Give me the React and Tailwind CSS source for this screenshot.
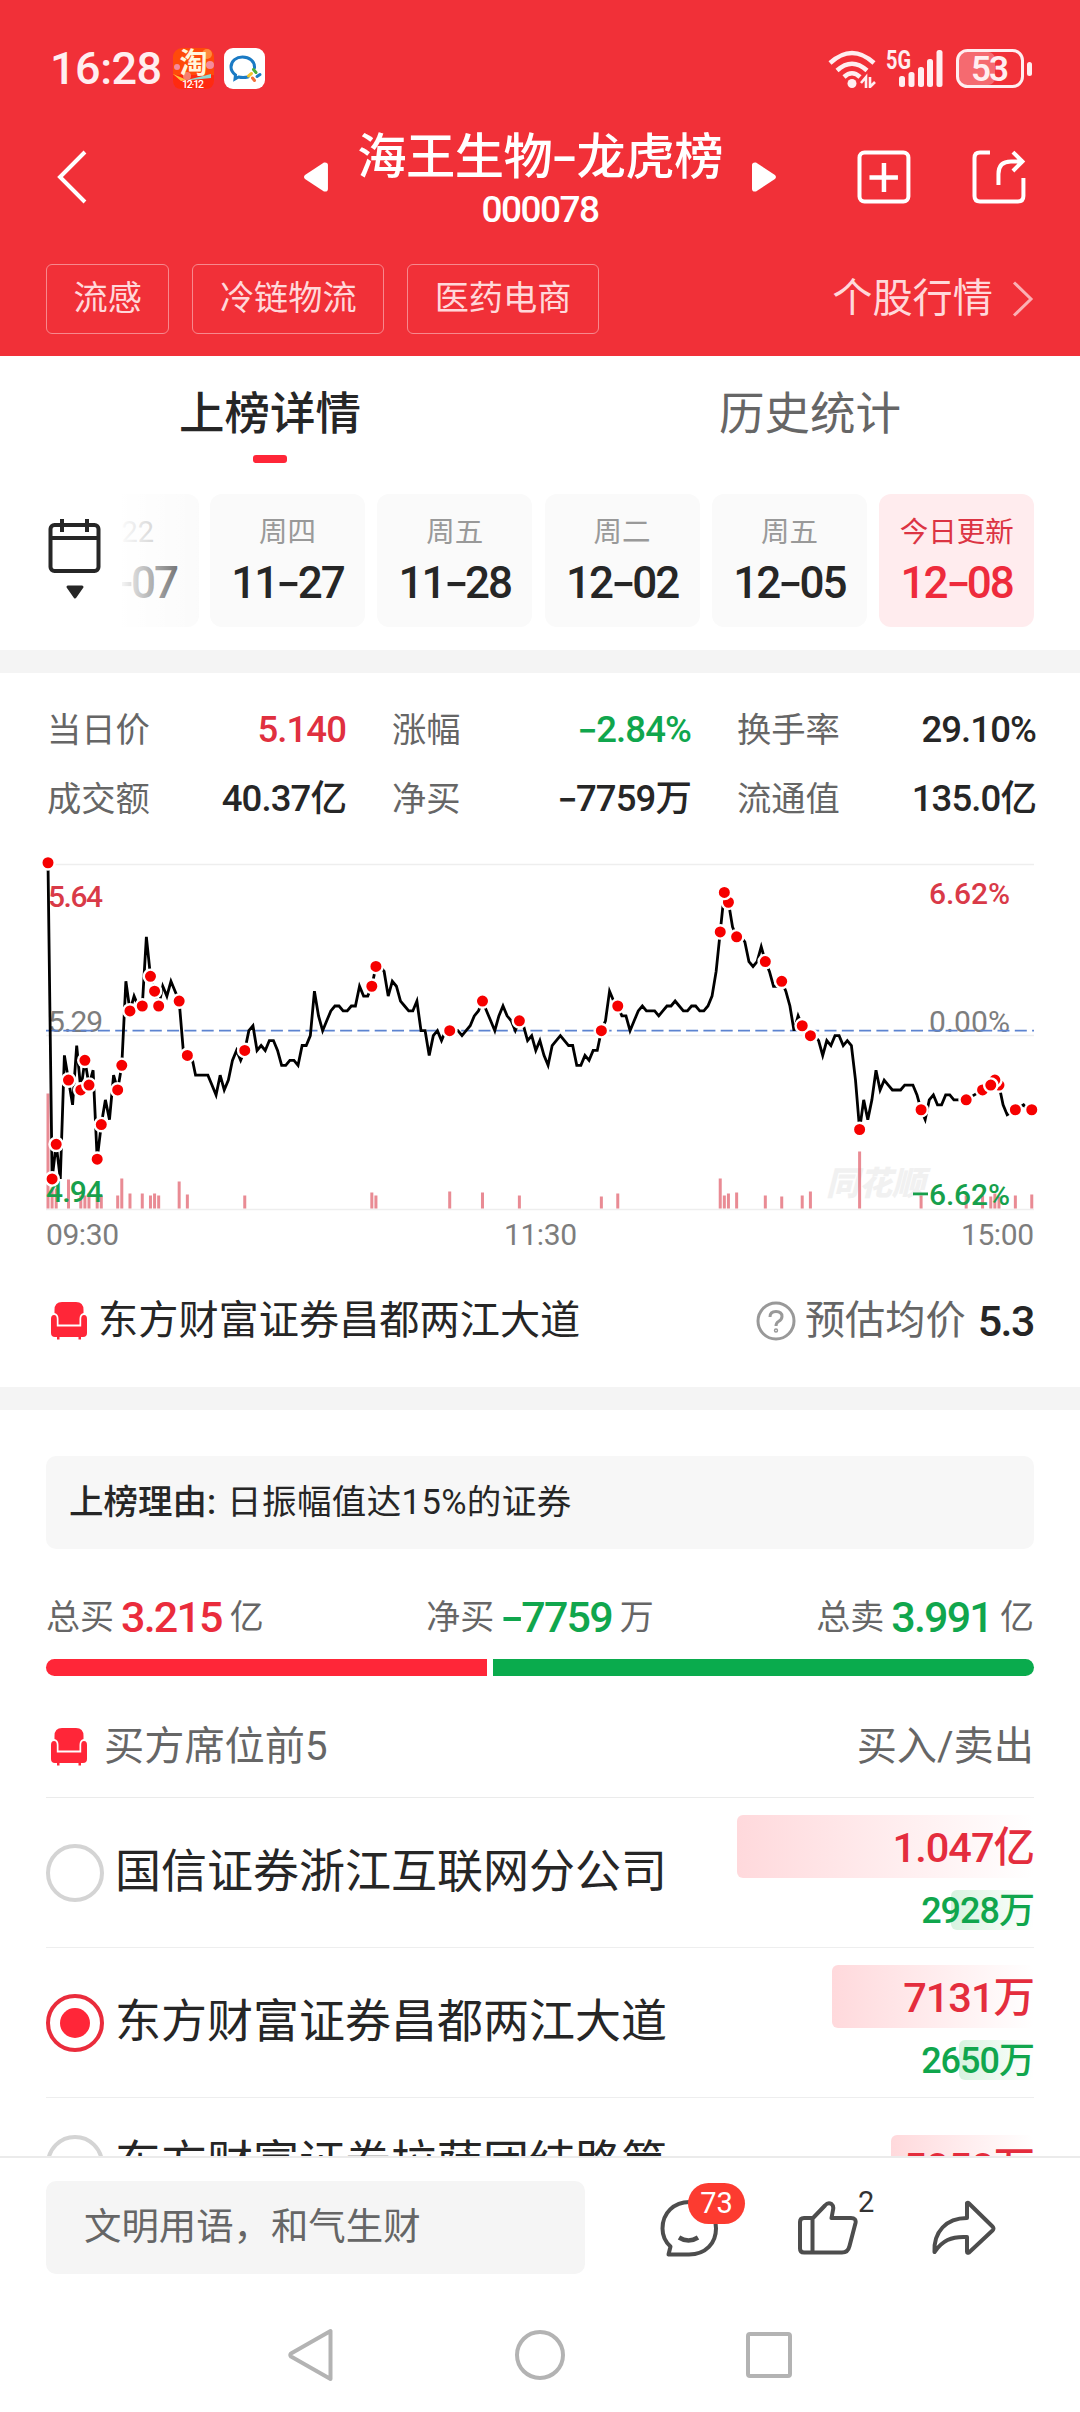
import { Fragment } from 'react'

// [minuto, ticks de 0.01 respecto al cierre anterior]
const precios = [
  [0, 34], [1, -30], [2, -23], [3, -30], [4, -5], [5, -10], [6, -15], [7, -3], [8, -12], [9, -6], [10, -11], [11, -8],
  [12, -26], [13, -19], [14, -14], [15, -18], [16, -9], [17, -12], [18, -7], [19, 10], [20, 4], [21, 7], [22, 5], [23, 5],
  [24, 19], [25, 11], [26, 8], [27, 5], [28, 9], [29, 7], [30, 10], [31, 8], [32, 6], [33, -4], [34, -5], [35, -5],
  [36, -9], [39, -9], [40, -11], [41, -13], [42, -9], [43, -12], [44, -10], [45, -6], [46, -4], [47, -6], [48, -4], [49, 0],
  [50, 1], [51, -4], [52, -3], [53, -4], [54, -2], [55, -2], [56, -4], [57, -7], [58, -7], [59, -6], [60, -6], [61, -7],
  [62, -3], [63, -3], [64, -1], [65, 8], [66, 3], [67, 0], [68, 2], [69, 4], [70, 5], [71, 5], [72, 4], [73, 4],
  [74, 5], [75, 5], [76, 9], [77, 7], [78, 7], [79, 9], [80, 13], [81, 13], [82, 12], [83, 7], [84, 10], [85, 9],
  [86, 6], [87, 5], [88, 4], [89, 4], [90, 6], [91, 0], [92, 0], [93, -5], [94, -1], [95, 0], [96, -2], [97, 0],
  [100, 0], [101, -1], [102, 0], [103, 1], [104, 3], [105, 4], [106, 6], [107, 4], [108, 2], [109, 0], [110, 3], [111, 5],
  [112, 3], [113, 2], [114, 0], [115, 2], [116, 1], [117, -2], [118, -1], [119, -4], [120, -2], [121, -5], [122, -7], [123, -3],
  [124, -2], [125, -1], [126, -2], [127, -3], [128, -3], [129, -7], [130, -7], [131, -5], [132, -6], [133, -4], [134, -4], [135, 0],
  [136, 2], [137, 8], [138, 6], [139, 5], [140, 3], [141, 3], [142, 0], [143, 2], [144, 4], [145, 5], [146, 4], [148, 4],
  [149, 3], [150, 4], [151, 5], [152, 5], [153, 6], [154, 5], [155, 4], [156, 4], [157, 5], [158, 5], [159, 4], [160, 4],
  [161, 5], [162, 7], [163, 12], [164, 20], [165, 28], [166, 26], [167, 21], [168, 19], [169, 19], [170, 18], [171, 14], [172, 13],
  [173, 14], [174, 17], [175, 14], [176, 12], [177, 9], [178, 9], [179, 10], [180, 8], [181, 5], [182, 0], [183, 3], [184, 1],
  [185, 0], [186, -1], [187, -1], [188, -2], [189, -5], [190, -2], [191, -3], [192, -1], [193, -1], [194, -3], [195, -2], [196, -3],
  [197, -10], [198, -20], [199, -14], [200, -18], [201, -14], [202, -8], [203, -12], [204, -10], [205, -11], [206, -12], [208, -12], [209, -11],
  [211, -11], [212, -13], [213, -16], [214, -18], [215, -14], [216, -13], [217, -15], [218, -15], [219, -13], [220, -13], [221, -14], [224, -14],
  [226, -13], [228, -12], [229, -11], [230, -11], [231, -10], [232, -11], [233, -15], [234, -17], [236, -16], [238, -15], [239, -16], [240, -16]
]

// en orden de dibujo: los últimos tapan a los anteriores
const puntos = [
  [0, 34], [2, -23], [1, -30], [5, -10], [8, -12], [9, -6], [10, -11], [12, -26], [13, -19], [17, -12], [18, -7], [20, 4],
  [23, 5], [25, 11], [26, 8], [27, 5], [32, 6], [34, -5], [48, -4], [79, 9], [80, 13], [98, 0], [106, 6], [115, 2],
  [135, 0], [139, 5], [164, 20], [166, 26], [165, 28], [168, 19], [175, 14], [179, 10], [186, -1], [184, 1], [198, -20],
  [213, -16], [224, -14], [232, -11], [231, -10], [228, -12], [230, -11], [236, -16], [240, -16]
]

// [minuto, alto]
const volumen = [
  [0, 115], [1, 21], [2, 20], [5, 29], [8, 13], [9, 13], [10, 15], [12, 13], [13, 13], [17, 13], [18, 30], [20, 15],
  [23, 15], [25, 13], [26, 15], [27, 13], [32, 27], [34, 14], [48, 13], [79, 16], [80, 13], [98, 17], [106, 16], [115, 13],
  [135, 12], [139, 15], [164, 30], [165, 13], [166, 15], [168, 16], [175, 13], [179, 12], [184, 13], [186, 17], [198, 57],
  [213, 13], [224, 13], [228, 13], [230, 12], [231, 15], [232, 12], [236, 13], [240, 14]
]

const px = (m) => 48 + m * 4.099
const py = (t) => 190.7 - t * 4.94

const fechas = [
  ['周四', '11-27'], ['周五', '11-28'], ['周二', '12-02'], ['周五', '12-05'], ['今日更新', '12-08']
]

const datos = [
  ['当日价', '5.140', 'text-[#e0303f]'], ['涨幅', '-2.84%', 'text-[#10a64d]'], ['换手率', '29.10%', 'text-[#262626]'],
  ['成交额', '40.37亿', 'text-[#262626]'], ['净买', '-7759万', 'text-[#262626]'], ['流通值', '135.0亿', 'text-[#262626]']
]

// El guion de Roboto es muy corto, se usa el de Inter algo más ancho
function Num({ children }) {
  const partes = children.split('-')
  return partes.map((p, i) => (
    <Fragment key={i}>
      {i > 0 && <span className="mx-px inline-block scale-x-[1.25] font-['Inter']">-</span>}
      {p}
    </Fragment>
  ))
}

function Sofa() {
  return (
    <svg width="38" height="40" viewBox="0 0 38 40" fill="#ff2638">
      <path d="M4.500 9 Q4.500 1 12 1 H26 Q33.500 1 33.500 9 V12 Q29.500 13 29.500 18 V23.500 H8.500 V18 Q8.500 13 4.500 12 Z" />
      <path d="M4 14 Q6.800 14 6.800 18 V25.500 H31.200 V18 Q31.200 14 34 14 Q37 14 37 18 V32 Q37 36 33 36 H31 V38.500 H28.500 V36 H9.500 V38.500 H7 V36 H5 Q1 36 1 32 V18 Q1 14 4 14 Z" />
    </svg>
  )
}

function BarraEstado() {
  return (
    <div className="flex h-[41px] items-center pl-[50px] pr-[46px] text-[#ffeef0]">
      <span className="w-[123px] text-[45px] leading-[56px] font-medium tracking-[-0.500px]">16:28</span>
      <svg className="overflow-visible" width="41" height="41" viewBox="0 0 41 41">
        <rect width="41" height="41" rx="9" fill="#ff4a0a" />
        <path d="M0 27 L41 27 V32 Q41 41 32 41 H9 Q0 41 0 32 Z" fill="#ff2a10" />
        <circle cx="34" cy="6" r="5" fill="#ff8a3c" />
        <circle cx="37" cy="17" r="4" fill="#f58a9c" />
        <circle cx="4" cy="19" r="3" fill="#f58a9c" />
        <path d="M0 26 L14 32 L8 33 Z" fill="#ffc23a" />
        <path d="M14 32 L38 26 V30 L18 32 Z" fill="#8fd8d0" />
        <circle cx="14" cy="28" r="4" fill="#f57f6e" />
        <text x="20.500" y="25" textAnchor="middle" fontSize="28" fontWeight="700" fill="#fff6dc" fontFamily="Noto Sans CJK SC">淘</text>
        <text x="20" y="40" textAnchor="middle" fontSize="10.500" fontWeight="500" fill="#fff" fontFamily="Roboto" textLength="22">12·12</text>
      </svg>
      <svg className="ml-[10px]" width="41" height="41" viewBox="0 0 41 41">
        <rect width="41" height="41" rx="9" fill="#fff" />
        <path d="M24 29 Q19 30 14.500 29 L11 31 L11.500 27 Q7 23.500 7 19 C7 12.500 12.500 9 18.500 9 C25 9 31 13 30.500 20" fill="none" stroke="#1a7ac4" strokeWidth="3" strokeLinecap="round" />
        <g strokeWidth="3" strokeLinecap="round">
          <path d="M29.500 21.500 L32 24.500" stroke="#4caf3a" />
          <path d="M36 26.500 L33 28.500" stroke="#1a7ac4" />
          <path d="M30.500 32.500 L28.500 30" stroke="#f0703a" />
          <path d="M24.500 28 L27.500 25.500" stroke="#f2c52e" />
        </g>
      </svg>
      <svg className="ml-auto" width="50" height="38" viewBox="0 0 50 38" fill="none" stroke="#ffeef0" strokeWidth="4.500">
        <path d="M2 13 Q24 -7 46 13" />
        <path d="M9 20.500 Q24 7 39 20.500" />
        <path d="M16 27 Q24 19.500 32 27" />
        <circle cx="24" cy="33.500" r="4.500" fill="#ffeef0" stroke="none" />
        <path d="M38 38 V27 L33 33 M42 27 V37 L47 32" strokeWidth="2.600" />
      </svg>
      <svg className="ml-[8px] overflow-visible" width="58" height="39" viewBox="0 0 58 39" fill="#ffeef0">
        <text x="0" y="20" fontSize="26" fontWeight="700" fontFamily="Roboto" textLength="25" lengthAdjust="spacingAndGlyphs">5G</text>
        <rect x="13" y="27" width="6" height="11" rx="2.500" />
        <rect x="22.500" y="23" width="6" height="15" rx="2.500" />
        <rect x="32" y="18" width="6" height="20" rx="2.500" />
        <rect x="41" y="10" width="6" height="28" rx="2.500" />
        <rect x="50.500" y="1" width="6" height="37" rx="2.500" />
      </svg>
      <svg className="ml-[12px] overflow-visible" width="78" height="39" viewBox="0 0 78 39">
        <rect x="3" y="3" width="36" height="33" rx="7" fill="#f56a70" />
        <rect x="1.500" y="1.500" width="65" height="36" rx="10" fill="none" stroke="#ffeef0" strokeWidth="3" />
        <rect x="71" y="13" width="5" height="14" rx="2.500" fill="#ffeef0" />
        <text x="15" y="32" fontSize="35" fontWeight="600" fontFamily="Roboto" fill="#ffeef0" textLength="38">53</text>
      </svg>
    </div>
  )
}

function Encabezado() {
  return (
    <header className="flex h-[356px] flex-col bg-[#f13038] pt-[48px] text-white">
      <BarraEstado />
      <div className="mt-[36px] flex h-[103px] items-center pl-[56px] pr-[54px]">
        <svg width="32" height="54" viewBox="0 0 32 54" fill="none" stroke="#fff" strokeWidth="4">
          <path d="M29 2 L4 27 L29 52" />
        </svg>
        <svg className="ml-[216px]" width="24" height="30" viewBox="0 0 24 30" fill="#fff">
          <path d="M1 13 L20 0.500 Q24 0 24 3 V27 Q24 30 20 29.500 L1 17 Q-1 15 1 13 Z" />
        </svg>
        <div className="flex w-[425px] flex-col items-center pt-[3px]">
          <h1 className="flex h-[62px] items-center text-[49.300px] leading-none font-medium tracking-[-0.500px] whitespace-nowrap">
            <span><Num>海王生物-龙虎榜</Num></span>
          </h1>
          <span className="flex h-[42px] items-center text-[37px] leading-none font-medium tracking-[-1.500px]">000078</span>
        </div>
        <svg width="24" height="30" viewBox="0 0 24 30" fill="#fff">
          <path d="M23 13 L4 0.500 Q0 0 0 3 V27 Q0 30 4 29.500 L23 17 Q25 15 23 13 Z" />
        </svg>
        <svg className="ml-[81px]" width="54" height="54" viewBox="0 0 54 54" fill="none" stroke="#fff" strokeWidth="4">
          <rect x="2.500" y="2.500" width="49" height="49" rx="5" />
          <path d="M27 13 V42 M12.500 27.500 H41" strokeWidth="4.500" />
        </svg>
        <svg className="ml-[61px]" width="54" height="54" viewBox="0 0 54 54" fill="none" stroke="#fff" strokeWidth="4">
          <path d="M18 2.500 H8 Q2.500 2.500 2.500 8 V46 Q2.500 51.500 8 51.500 H46 Q51.500 51.500 51.500 46 V28" />
          <path d="M26.500 35 V24 Q26.500 11.500 39 11.500 H50 M41 2 L50.500 11.500 L41 21" />
        </svg>
      </div>
      <div className="mt-[36px] flex h-[70px] items-center gap-[23px] pl-[46px] pr-[46px] text-[#ffd8da]">
        {['流感', '冷链物流', '医药电商'].map((t) => (
          <span key={t} className="flex h-[70px] items-center rounded-[6px] border border-[#f7888d] px-[26.500px] pb-[2px] text-[34.200px] leading-none">{t}</span>
        ))}
        <span className="ml-auto flex items-center text-[40.200px] leading-none">
          个股行情
          <svg className="ml-[19px]" width="22" height="36" viewBox="0 0 22 36" fill="none" stroke="#fbb0b4" strokeWidth="3">
            <path d="M2 1.500 L19 18 L2 34.500" />
          </svg>
        </span>
      </div>
    </header>
  )
}

function Fechas() {
  return (
    <div className="mt-[31px] flex h-[133px] pl-[46px]">
      <div className="flex w-[76px] flex-col pt-[25px]">
        <svg width="56" height="82" viewBox="0 0 56 82" fill="none" stroke="#262626" strokeWidth="4">
          <rect x="4.500" y="6" width="48" height="46" rx="4" />
          <path d="M4 19 H53 M16 0 V13 M41 0 V13" />
          <path d="M22 68 H36 L29 78 Z" fill="#262626" strokeWidth="3" strokeLinejoin="round" />
        </svg>
      </div>
      <div className="relative flex w-[77px] flex-col items-end overflow-hidden rounded-r-[12px] bg-[#fafafa] leading-none">
        <span className="mt-[24px] mr-[45px] text-[29px] text-[#999]">22</span>
        <span className="mt-[13px] mr-[22px] text-[44px] font-medium tracking-[-2px] whitespace-nowrap text-[#262626]"><Num>11-07</Num></span>
        <div className="absolute inset-0 bg-gradient-to-r from-white/95 to-white/15"></div>
      </div>
      <div className="ml-[11px] flex gap-[12.300px]">
        {fechas.map(([dia, fecha]) => (
          <div key={fecha} className={`flex w-[155px] flex-col items-center rounded-[12px] leading-none whitespace-nowrap ${dia === '今日更新' ? 'bg-[#ffecee] text-[#ee2b3c]' : 'bg-[#fafafa] text-[#262626]'}`}>
            <span className={`mt-[25px] text-[28.500px] ${dia === '今日更新' ? 'text-[#dc3443]' : 'text-[#999]'}`}>{dia}</span>
            <span className="mt-[12px] text-[44px] font-medium tracking-[-2px]"><Num>{fecha}</Num></span>
          </div>
        ))}
      </div>
    </div>
  )
}

function Grafico() {
  return (
    <svg className="block" width="1080" height="420" viewBox="0 0 1080 420" fontFamily="Roboto" fontSize="30" fontWeight="500">
      <path d="M46 24.500 H1034 M46 195.500 H1034 M46 369.500 H1034" stroke="#eeeeee" strokeWidth="1.500" />
      <text x="826" y="355" fontSize="33" fontWeight="900" fontStyle="italic" fill="#f1f1f1" fontFamily="Noto Sans CJK SC">同花顺</text>
      <g fill="#d93a48">
        <text x="48" y="67" textLength="55">5.64</text>
        <text x="929" y="64" textLength="81">6.62%</text>
      </g>
      <g fill="#7d7d7d" fontWeight="400">
        <text x="48" y="192" textLength="55">5.29</text>
        <text x="929" y="192" textLength="81">0.00%</text>
        <text x="46" y="405" textLength="73">09:30</text>
        <text x="504" y="405" textLength="73">11:30</text>
        <text x="961" y="405" textLength="73">15:00</text>
      </g>
      <path d="M46 190.700 H1034" stroke="#5c83d0" strokeWidth="1.800" strokeDasharray="12 5.300" />
      <g fill="#e05a66" fillOpacity="0.700">
        {volumen.map(([m, h]) => <rect key={m} x={px(m) - 1.5} y={368.5 - h} width="3" height={h} />)}
      </g>
      <g fill="#17a04c">
        <text x="46" y="361.500" textLength="57">4.94</text>
        <rect x="913" y="352.500" width="15" height="2.800" />
        <text x="929" y="364.500" textLength="81">6.62%</text>
      </g>
      <polyline points={precios.map(([m, t]) => `${px(m)},${py(t)}`).join(' ')} fill="none" stroke="#000" strokeWidth="2.800" />
      {puntos.map(([m, t]) => (
        <circle key={m} cx={px(m)} cy={py(t)} r="6.700" fill="#f60000" stroke="#fff" strokeWidth="2.400" />
      ))}
    </svg>
  )
}

function Total({ label, valor, unidad, color }) {
  return (
    <div className="flex items-center text-[34px] leading-none text-[#666]">
      <span>{label}</span>
      <span className={`mr-[8px] ml-[7px] text-[43px] font-medium tracking-[-1.800px] ${color}`}><Num>{valor}</Num></span>
      <span>{unidad}</span>
    </div>
  )
}

function Asiento({ nombre, compra, venta, anchoCompra, anchoVenta, activo, ultimo }) {
  return (
    <div className={`flex border-b-[1.500px] border-[#eeeeee] leading-none ${ultimo ? 'h-[196px] pt-[37px]' : 'h-[150px] pt-[46px]'}`}>
      <span className={`flex size-[58px] shrink-0 items-center justify-center rounded-full ${activo ? 'border-[4px] border-[#ea2c3c]' : 'border-[4px] border-[#d4d4d4]'}`}>
        {activo && <span className="size-[30px] rounded-full bg-[#ff2638]"></span>}
      </span>
      <span className="ml-[11px] w-[556px] text-[46px] leading-[54px] text-[#262626]">{nombre}</span>
      <div className={`ml-auto flex flex-col items-end ${ultimo ? '' : '-mt-[29px]'}`}>
        <div className="relative flex h-[63px] w-[300px] items-center justify-end">
          <div className="absolute inset-y-0 right-0 rounded-[6px] bg-gradient-to-r from-[#ffd9dc] to-white" style={{ width: anchoCompra }}></div>
          <span className="relative pt-[2px] text-[41.500px] font-medium tracking-[-1px] text-[#e42d3d]">{compra}</span>
        </div>
        <div className="relative mt-[12px] flex h-[40px] w-[300px] items-center justify-end">
          <div className="absolute inset-y-0 right-0 rounded-[6px] bg-gradient-to-r from-[#d8f3e0] to-white" style={{ width: anchoVenta }}></div>
          <span className="relative pt-[2px] text-[36px] font-medium tracking-[-1px] text-[#10a64d]">{venta}</span>
        </div>
      </div>
    </div>
  )
}

function BarraInferior() {
  return (
    <footer className="flex h-[256px] flex-col border-t-2 border-[#ebebeb] bg-white">
      <div className="mt-[23px] flex h-[93px] items-center pl-[46px]">
        <div className="flex h-full w-[539px] items-center rounded-[10px] bg-[#f5f5f5] pl-[38px] text-[37.400px] leading-none text-[#666]">文明用语，和气生财</div>
        <div className="relative ml-[75px] h-[58px] w-[58px]">
          <svg width="58" height="58" viewBox="0 0 58 58" fill="none" stroke="#4d4d4d" strokeWidth="4" strokeLinejoin="round">
            <path d="M8.500 55.500 H29 C46 55.500 56 44 56 29.500 C56 14 44 3 29.500 3 C14 3 2.500 14 2.500 29.500 C2.500 37 5.500 43 10.500 47.500 Z" />
            <path d="M19 38.500 Q28.500 44.500 38 38.500" strokeWidth="4.500" />
          </svg>
          <span className="absolute -top-[16px] left-[28px] flex h-[41px] w-[57px] items-center justify-center rounded-full bg-[#fc3b30] text-[29px] leading-none text-white">73</span>
        </div>
        <div className="relative ml-[79px] h-[56px] w-[62px]">
          <svg width="62" height="56" viewBox="0 0 62 56" fill="none" stroke="#4d4d4d" strokeWidth="4" strokeLinejoin="round">
            <path d="M16 18 L28 5.500 Q31 2 34.500 4 Q37 6 36 10 L34.500 18 H54 Q59.500 18 58.500 23 L52.500 46 Q51 52.500 45 52.500 H7 Q3 52.500 3 48.500 V22 Q3 18 7 18 Z M15.500 18 V52" />
          </svg>
          <span className="absolute -top-[12px] left-[61px] text-[29px] leading-none text-[#333]">2</span>
        </div>
        <svg className="ml-[72px]" width="66" height="56" viewBox="0 0 66 56" fill="none" stroke="#4d4d4d" strokeWidth="4" strokeLinejoin="round">
          <path d="M36 3 Q37 2.500 38 3.500 L61.500 26.500 Q63.500 28.500 61.500 30.500 L38 52.500 Q36 53.500 36 51.500 V37 C20 36 11 41 3.500 52 C2.500 32 15 18 36 18 Z" />
        </svg>
      </div>
      <div className="mt-[54px] flex h-[54px] items-center justify-center gap-[180px]">
        <svg width="46" height="54" viewBox="0 0 46 54" fill="none" stroke="#b3b3b3" strokeWidth="4" strokeLinejoin="round">
          <path d="M42.500 3 V51 L3 28.500 Q1.500 27 3 25.500 Z" />
        </svg>
        <svg width="52" height="54" viewBox="0 0 52 54" fill="none" stroke="#b3b3b3" strokeWidth="4">
          <circle cx="26" cy="27" r="23" />
        </svg>
        <svg width="46" height="54" viewBox="0 0 46 54" fill="none" stroke="#b3b3b3" strokeWidth="4">
          <rect x="2" y="6" width="42" height="42" rx="2" />
        </svg>
      </div>
    </footer>
  )
}

export default function App() {
  return (
    <div className="flex h-[2412px] w-[1080px] flex-col overflow-hidden bg-white font-['Roboto','Noto_Sans_CJK_SC',sans-serif]">
      <Encabezado />

      <main className="h-[1800px] overflow-hidden">
        <div className="grid h-[107px] grid-cols-2 text-[45.500px] leading-none">
          <div className="flex flex-col items-center pt-[36px] font-medium text-[#262626]">
            上榜详情
            <span className="mt-[17px] h-[8px] w-[34px] rounded-[3px] bg-[#ff2638]"></span>
          </div>
          <div className="flex flex-col items-center pt-[36px] text-[#666]">历史统计</div>
        </div>
        <Fechas />
        <div className="mt-[23px] h-[23px] bg-[#f4f4f4]"></div>

        <div className="grid h-[167px] grid-cols-3 content-start gap-x-[46px] gap-y-[21px] pt-[33px] pl-[47px] pr-[44px]">
          {datos.map(([label, valor, color]) => (
            <div key={label} className="flex h-[48px] items-center justify-between text-[34.300px] leading-none">
              <span className="text-[#666]">{label}</span>
              <span className={`text-[36.500px] font-medium tracking-[-0.900px] ${color}`}><Num>{valor}</Num></span>
            </div>
          ))}
        </div>

        <Grafico />

        <div className="flex h-[127px] items-center pr-[46px] pb-[5px] pl-[50px] text-[40.200px] leading-none text-[#262626]">
          <Sofa />
          <span className="ml-[10px]">东方财富证券昌都两江大道</span>
          <svg className="ml-auto" width="40" height="40" viewBox="0 0 40 40" fill="none" stroke="#999" strokeWidth="3">
            <circle cx="20" cy="20" r="18" />
            <path d="M14 16 Q14 10.500 20 10.500 Q26 10.500 26 15.500 Q26 18.500 22.500 20.500 Q20 22 20 25" />
            <circle cx="20" cy="29.500" r="0.700" />
          </svg>
          <span className="ml-[9px] text-[#666]">预估均价</span>
          <span className="ml-[12px] text-[43px] font-medium tracking-[-1.500px]">5.3</span>
        </div>
        <div className="h-[23px] bg-[#f4f4f4]"></div>

        <section className="px-[46px] pt-[46px]">
          <div className="flex h-[93px] items-center rounded-[10px] bg-[#f7f7f7] pl-[23px] text-[34.500px] leading-none text-[#262626]">
            <span className="font-medium">上榜理由:</span>
            <span className="ml-[11px] tracking-[0.400px]">日振幅值达15%的证券</span>
          </div>
          <div className="mt-[43px] flex h-[50px] items-center justify-between">
            <Total label="总买" valor="3.215" unidad="亿" color="text-[#ea2c3c]" />
            <Total label="净买" valor="-7759" unidad="万" color="text-[#10a64d]" />
            <Total label="总卖" valor="3.991" unidad="亿" color="text-[#10a64d]" />
          </div>
          <div className="mt-[17px] flex h-[17px] gap-[6px]">
            <div className="w-[441px] rounded-l-full bg-[#ff2638]"></div>
            <div className="grow rounded-r-full bg-[#0aab4d]"></div>
          </div>
          <div className="flex h-[122px] items-center border-b-[1.500px] border-[#ebebeb] pl-[4px] pt-[21px] text-[40.200px] leading-none text-[#666]">
            <Sofa />
            <span className="ml-[16px]">买方席位前5</span>
            <span className="ml-auto">买入/卖出</span>
          </div>
          <Asiento nombre="国信证券浙江互联网分公司" compra="1.047亿" venta="2928万" anchoCompra={297} anchoVenta={83} />
          <Asiento nombre="东方财富证券昌都两江大道" compra="7131万" venta="2650万" anchoCompra={202} anchoVenta={75} activo />
          <Asiento nombre="东方财富证券拉萨团结路第二证券营业部" compra="5050万" venta="4870万" anchoCompra={143} anchoVenta={138} ultimo />
        </section>
      </main>

      <BarraInferior />
    </div>
  )
}
